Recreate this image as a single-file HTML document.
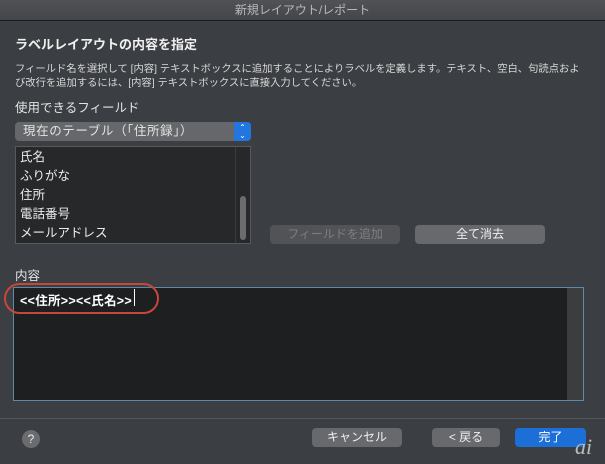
<html><head><style>
body{margin:0;width:605px;height:464px;background:#3b3e42;font-family:"Liberation Sans","Noto Sans CJK JP",sans-serif;color:#e4e4e4;position:relative;overflow:hidden}
div{position:absolute;box-sizing:border-box}
.t{white-space:nowrap}
.btn{background:#67696c;border-radius:4px;color:#f0f0f0;font-size:12px;text-align:center;line-height:19px;height:19px}
</style></head><body>
<div style="left:0;top:0;width:605px;height:21px;background:linear-gradient(#505256,#44474a);border-bottom:1px solid #1a1a1a;text-align:center;font-size:12px;line-height:21px;color:#b8b8b8">新規レイアウト/レポート</div>
<div class="t" style="left:15px;top:34px;font-size:13px;font-weight:bold;color:#f0f0f0">ラベルレイアウトの内容を指定</div>
<div style="left:15px;top:63px;width:580px;font-size:10.3px;line-height:14px;color:#d8d8d8">フィールド名を選択して [内容] テキストボックスに追加することによりラベルを定義します。テキスト、空白、句読点およ<br>び改行を追加するには、[内容] テキストボックスに直接入力してください。</div>
<div class="t" style="left:15px;top:97px;font-size:12.5px">使用できるフィールド</div>
<div style="left:15px;top:122px;width:236px;height:19px;background:#65676a;border-radius:4px;font-size:12.5px;line-height:19px;padding-left:8px;letter-spacing:0.6px">現在のテーブル（「住所録」）</div>
<div style="left:234px;top:122px;width:17px;height:19px;background:#2176e0;border-radius:0 4px 4px 0;color:#fff;font-size:8px;line-height:8px;text-align:center;padding-top:2px">⌃<br>⌄</div>
<div style="left:15px;top:146px;width:236px;height:98px;background:#26282a;border:1px solid #58595b"></div>
<div style="left:235px;top:147px;width:1px;height:96px;background:#3a3c3e"></div>
<div style="left:240px;top:196px;width:6px;height:44px;background:#6a6c6e;border-radius:3px"></div>
<div style="left:20px;top:148px;font-size:12.5px;line-height:19px;color:#ececec">氏名<br>ふりがな<br>住所<br>電話番号<br>メールアドレス</div>
<div class="btn" style="left:270px;top:225px;width:130px;background:#515356;color:#7c7e80">フィールドを追加</div>
<div class="btn" style="left:415px;top:225px;width:130px">全て消去</div>
<div class="t" style="left:15px;top:265px;font-size:12.5px">内容</div>
<div style="left:13px;top:287px;width:571px;height:114px;background:#1e1f20;border:1px solid #5d8aa6"></div>
<div style="left:567px;top:288px;width:16px;height:112px;background:#3b3d3f"></div>
<div class="t" style="left:20px;top:290px;font-size:12.5px;font-weight:bold;color:#fff;letter-spacing:0.3px">&lt;&lt;住所&gt;&gt;&lt;&lt;氏名&gt;&gt;</div>
<div style="left:134px;top:289px;width:1px;height:17px;background:#fff"></div>
<div style="left:4px;top:283px;width:155px;height:31px;border:2px solid #c9463b;border-radius:16px"></div>
<div style="left:0;top:418px;width:605px;height:1px;background:#55585c"></div>
<div style="left:22px;top:430px;width:18px;height:18px;border-radius:50%;background:#6a6c6f;color:#eee;font-size:12px;text-align:center;line-height:18px">?</div>
<div class="btn" style="left:312px;top:428px;width:90px">キャンセル</div>
<div class="btn" style="left:432px;top:428px;width:68px">&lt; 戻る</div>
<div class="btn" style="left:515px;top:428px;width:71px;background:#1d6fd8;color:#fff">完了</div>
<div class="t" style="left:575px;top:434px;font-size:22px;font-style:italic;color:#bbb;font-family:'Liberation Serif',serif">ai</div>
</body></html>
